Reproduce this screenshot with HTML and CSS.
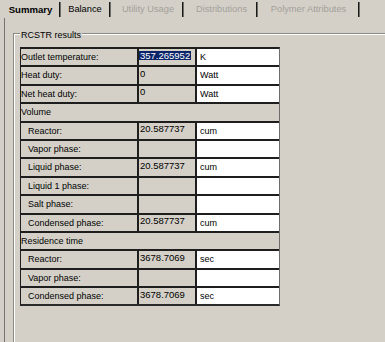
FILE: index.html
```html
<!DOCTYPE html>
<html>
<head>
<meta charset="utf-8">
<link rel="stylesheet" href="styles.css">
</head>
<body>
<div class="tabs">
  <div class="tab tab-summary active">Summary</div>
  <div class="tab tab-balance">Balance</div>
  <div class="tab tab-utility disabled">Utility Usage</div>
  <div class="tab tab-dist disabled">Distributions</div>
  <div class="tab tab-poly disabled">Polymer Attributes</div>
  <div class="tab-fill"></div>
</div>
<div class="panel">
  <div class="group">
    <div class="legend">RCSTR results</div>
    <div class="grid">
      <div class="lbl">Outlet temperature:</div><div class="val"><span class="sel">357.265952</span></div><div class="unit">K</div>
      <div class="lbl">Heat duty:</div><div class="val">0</div><div class="unit">Watt</div>
      <div class="lbl">Net heat duty:</div><div class="val">0</div><div class="unit">Watt</div>
      <div class="section">Volume</div>
      <div class="lbl ind">Reactor:</div><div class="val">20.587737</div><div class="unit">cum</div>
      <div class="lbl ind">Vapor phase:</div><div class="val"></div><div class="unit"></div>
      <div class="lbl ind">Liquid phase:</div><div class="val">20.587737</div><div class="unit">cum</div>
      <div class="lbl ind">Liquid 1 phase:</div><div class="val"></div><div class="unit"></div>
      <div class="lbl ind">Salt phase:</div><div class="val"></div><div class="unit"></div>
      <div class="lbl ind">Condensed phase:</div><div class="val">20.587737</div><div class="unit">cum</div>
      <div class="section">Residence time</div>
      <div class="lbl ind">Reactor:</div><div class="val">3678.7069</div><div class="unit">sec</div>
      <div class="lbl ind">Vapor phase:</div><div class="val"></div><div class="unit"></div>
      <div class="lbl ind">Condensed phase:</div><div class="val">3678.7069</div><div class="unit">sec</div>
    </div>
  </div>
</div>
</body>
</html>
```

FILE: styles.css
```css
html, body {
  margin: 0;
  padding: 0;
}
body {
  width: 385px;
  height: 342px;
  overflow: hidden;
  background: #d4d0c8;
  font-family: "Liberation Sans", Arial, sans-serif;
  font-size: 9px;
  color: #000;
}

/* Tabs */
.tabs {
  display: flex;
  height: 18px;
  padding-left: 2px;
  box-sizing: border-box;
}
.tab {
  margin-top: 2px;
  height: 15px;
  line-height: 15px;
  font-size: 9.3px;
  text-align: center;
  white-space: nowrap;
  box-sizing: border-box;
  border-right: 1px solid #1a1a1a;
  box-shadow: 1px 0 0 #6f6d68;
  margin-right: 1px;
}
.tab.active {
  font-weight: bold;
  font-size: 9.6px;
}
.tab.disabled {
  color: #a3a09a;
}
.tab-summary { width: 58px; }
.tab-balance { width: 49px; }
.tab-utility { width: 72px; padding-left: 3px; }
.tab-dist { width: 73px; padding-left: 3px; }
.tab-poly { width: 101px; padding-left: 1px; }
.tab-fill {
  flex: 1;
}

/* Panel */
.panel {
  margin-left: 4px;
  border-left: 1px solid #76746e;
  padding: 15px 0 0 8px;
  height: 324px;
  box-sizing: border-box;
}
.group {
  position: relative;
  border-top: 1px solid #8c8980;
  border-left: 1px solid #8c8980;
  box-shadow: inset 1px 1px 0 #ffffff;
  padding: 13px 0 0 6px;
  height: 309px;
  box-sizing: border-box;
}
.legend {
  position: absolute;
  left: 6px;
  top: -4px;
  padding: 0 1px;
  line-height: 11px;
  background: #d4d0c8;
}

/* Grid */
.grid {
  display: grid;
  grid-template-columns: 116px 56px 82px;
  grid-auto-rows: 16.4px;
  gap: 2px;
  width: max-content;
  background: #1e1e1e;
  border-top: 2px solid #1e1e1e;
  border-left: 1px solid #1e1e1e;
  border-bottom: 2px solid #2a2a2a;
  border-right: 1px solid #6e6c68;
}
.lbl, .section {
  background: #d4d0c8;
  line-height: 16.4px;
  white-space: nowrap;
  overflow: hidden;
}
.lbl.ind {
  padding-left: 7px;
}
.section {
  grid-column: 1 / -1;
}
.val {
  background: #d4d0c8;
  font-size: 9.5px;
  line-height: 9px;
  padding-top: 1.5px;
  white-space: nowrap;
  overflow: hidden;
}
.sel {
  display: inline-block;
  background: #0a246a;
  color: #ffffff;
  padding: 0 1px;
  line-height: 9px;
}
.val:not(:has(.sel)) {
  padding-left: 1px;
}
.unit {
  background: #ffffff;
  line-height: 16.4px;
  padding-left: 3px;
  white-space: nowrap;
}
```
